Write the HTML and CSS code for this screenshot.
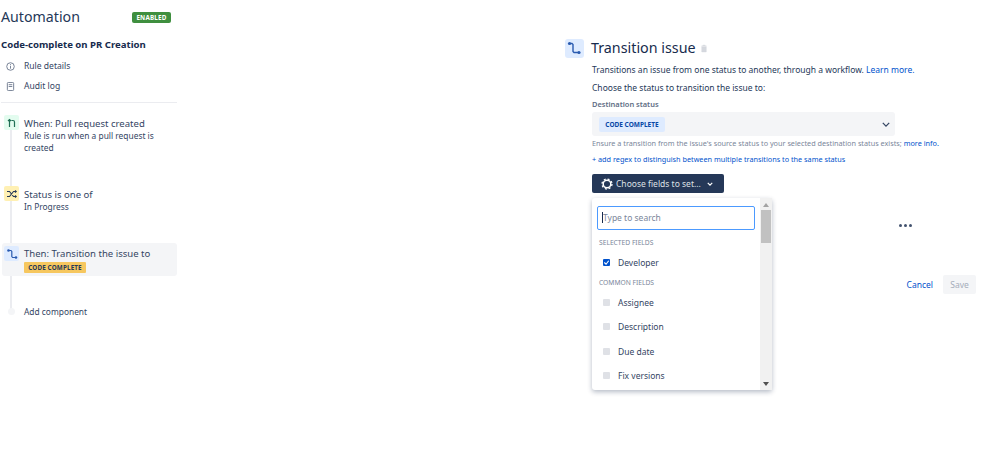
FILE: index.html
```html
<!DOCTYPE html>
<html lang="en">
<head>
<meta charset="utf-8">
<title>Automation</title>
<link rel="stylesheet" href="styles.css">
</head>
<body>
<div class="page">
  <aside class="sidebar">
    <header class="side-head">
      <h1 class="side-title">Automation</h1>
      <span class="badge-enabled">ENABLED</span>
    </header>
    <h2 class="rule-name">Code-complete on PR Creation</h2>
    <nav class="side-nav">
      <a class="nav-item">
        <svg class="nav-icon" viewBox="0 0 10 10" width="9" height="9"><circle cx="5" cy="5" r="4.200" fill="none" stroke="#6b778c" stroke-width="1"/><path d="M5 4.400v3M5 2.400v1.200" stroke="#6b778c" stroke-width="1"/></svg>
        <span>Rule details</span>
      </a>
      <a class="nav-item">
        <svg class="nav-icon" viewBox="0 0 10 10" width="9" height="9"><rect x="1.500" y="0.500" width="7" height="9" rx="1" fill="none" stroke="#6b778c"/><path d="M3 3h4M3 5h4" stroke="#6b778c"/></svg>
        <span>Audit log</span>
      </a>
    </nav>
    <div class="divider"></div>
    <div class="timeline">
      <div class="step step-when">
        <span class="step-icon icon-green">
          <svg viewBox="0 0 12 12" width="12" height="12"><path d="M3.500 10V2.500M2 4 3.500 2.500 5 4M5.500 3.500H7a1.500 1.500 0 0 1 1.500 1.500v5" fill="none" stroke="#1f6f55" stroke-width="1.200"/></svg>
        </span>
        <div class="step-body">
          <div class="step-title step-title-low">When: Pull request created</div>
          <div class="step-sub">Rule is run when a pull request is created</div>
        </div>
      </div>
      <div class="step step-cond">
        <span class="step-icon icon-yellow">
          <svg viewBox="0 0 12 12" width="12" height="12"><path d="M1 3.500h2.500l4 5H10M1 8.500h2.500l4-5H10M9 2.500l1.200 1-1.200 1M9 7.500l1.200 1-1.200 1" fill="none" stroke="#253858" stroke-width="1.100"/></svg>
        </span>
        <div class="step-body">
          <div class="step-title step-title-low">Status is one of</div>
          <div class="step-sub">In Progress</div>
        </div>
      </div>
      <div class="step step-then">
        <span class="step-icon icon-blue">
          <svg viewBox="0 0 14 14" width="14" height="14"><path d="M3.500 3.500H6l.8 1v5l.8 1H11" fill="none" stroke="#2a5bb0" stroke-width="1.200"/><circle cx="3.500" cy="3.500" r="1.300" fill="#2a5bb0"/><circle cx="11" cy="10.500" r="1.300" fill="#2a5bb0"/></svg>
        </span>
        <div class="step-body">
          <div class="step-title">Then: Transition the issue to</div>
          <span class="tag-yellow">CODE COMPLETE</span>
        </div>
      </div>
      <div class="step step-add">
        <span class="add-dot"></span>
        <div class="add-label">Add component</div>
      </div>
    </div>
  </aside>

  <main class="panel">
    <div class="panel-head">
      <span class="panel-icon">
        <svg viewBox="0 0 19 19" width="19" height="19"><path d="M4.500 4.500H7l1 1v7l1 1h5" fill="none" stroke="#2a5bb0" stroke-width="1.400"/><circle cx="4.500" cy="4.500" r="1.600" fill="#2a5bb0"/><circle cx="14" cy="13.500" r="1.600" fill="#2a5bb0"/></svg>
      </span>
      <h2 class="panel-title">Transition issue</h2>
      <svg class="trash" viewBox="0 0 8 10" width="6" height="9"><path d="M0.500 1.500h7M2.500 1.500V.6h3v.9M1 2.500h6v7H1z" fill="#d5d8de" stroke="#d5d8de" stroke-width="0.700"/></svg>
    </div>
    <div class="panel-body">
      <p class="desc">Transitions an issue from one status to another, through a workflow. <a class="link">Learn more.</a></p>
      <p class="desc desc-second">Choose the status to transition the issue to:</p>
      <label class="field-label">Destination status</label>
      <div class="select">
        <span class="tag-blue">CODE COMPLETE</span>
        <svg class="select-chev" viewBox="0 0 10 6" width="8" height="5"><path d="M1 1l4 4 4-4" fill="none" stroke="#344563" stroke-width="1.600"/></svg>
      </div>
      <p class="help">Ensure a transition from the issue's source status to your selected destination status exists; <a class="link">more info.</a></p>
      <p class="help help-link"><a class="link">+ add regex to distinguish between multiple transitions to the same status</a></p>
      <div class="fields-wrap">
        <button class="fields-btn">
          <svg viewBox="0 0 12 12" width="12" height="12"><circle cx="6" cy="6" r="3.800" fill="none" stroke="#fff" stroke-width="1.500"/><circle cx="6" cy="6" r="5" fill="none" stroke="#fff" stroke-width="1.300" stroke-dasharray="2 1.930"/></svg>
          <span>Choose fields to set...</span>
          <svg class="btn-chev" viewBox="0 0 8 5" width="6" height="4"><path d="M1 1l3 3 3-3" fill="none" stroke="#fff" stroke-width="1.600"/></svg>
        </button>
        <div class="menu">
          <div class="menu-main">
            <div class="search-box"><span class="caret"></span><span class="search-ph">Type to search</span></div>
            <div class="group-label group-first">SELECTED FIELDS</div>
            <div class="option"><span class="check check-on"><svg viewBox="0 0 8 8" width="7" height="7"><path d="M1.500 4l2 2 3-4" fill="none" stroke="#fff" stroke-width="1.300"/></svg></span>Developer</div>
            <div class="group-label">COMMON FIELDS</div>
            <div class="option"><span class="check"></span>Assignee</div>
            <div class="option"><span class="check"></span>Description</div>
            <div class="option"><span class="check"></span>Due date</div>
            <div class="option"><span class="check"></span>Fix versions</div>
          </div>
          <div class="scrollbar">
            <span class="arrow-up"></span>
            <span class="thumb"></span>
            <span class="arrow-down"></span>
          </div>
        </div>
      </div>
      <div class="more"><i></i><i></i><i></i></div>
      <div class="actions">
        <a class="link cancel">Cancel</a>
        <button class="save">Save</button>
      </div>
    </div>
  </main>
</div>
</body>
</html>
```
FILE: styles.css
```css
* { box-sizing: border-box; }
html, body { margin: 0; padding: 0; background: #fff; }
body { font-family: "Noto Sans", sans-serif; color: #253858; }
.page { display: flex; width: 998px; height: 451px; overflow: hidden; }

.sidebar { width: 177px; padding-top: 6px; flex: none; }
.side-head { display: flex; align-items: center; justify-content: space-between; height: 22px; padding: 0 6px 0 1px; }
.side-title { margin: 0; font-size: 14.200px; font-weight: 400; line-height: 22px; color: #253858; }
.badge-enabled { width: 39px; text-align: center; background: #3f8f3f; color: #fff; font-size: 6.300px; font-weight: 700; line-height: 11px; height: 11px; border-radius: 2px; letter-spacing: .2px; }
.rule-name { margin: 9px 0 0 1px; font-size: 9.600px; font-weight: 700; line-height: 16px; color: #172b4d; }
.side-nav { margin-top: 3px; }
.nav-item { display: flex; align-items: center; height: 20px; font-size: 8.550px; color: #344563; }
.nav-icon { margin: 0 9px 0 6px; flex: none; }
.divider { height: 1px; background: #ebecf0; margin: 6px 0 0 1px; }

.timeline { position: relative; margin-top: 12px; }
.timeline::before { content: ""; position: absolute; left: 10px; top: 10px; height: 186px; width: 2px; background: #ebecf0; }
.step { position: relative; display: flex; }
.step-icon { flex: none; width: 15px; height: 15px; margin: 0 5px 0 4px; border-radius: 2px; display: flex; align-items: center; justify-content: center; }
.icon-green { background: #e3fcef; }
.icon-yellow { background: #fff0b3; }
.icon-blue { background: #deebff; }
.step-title { font-size: 9.550px; line-height: 15px; color: #344563; }
.step-title-low { padding-top: 1px; margin-bottom: -1px; }
.step-sub { font-size: 8.400px; line-height: 12px; color: #344563; }
.step-when { height: 71px; }
.step-when .step-body { width: 140px; }
.step-cond { height: 57px; }
.step-then { background: #f4f5f7; height: 33px; border-radius: 3px; margin-left: 2px; padding-top: 3px; }
.step-then .step-icon { margin-left: 2px; }
.tag-yellow { display: block; width: 62px; text-align: center; background: #f6c75f; color: #253858; font-size: 6.300px; font-weight: 700; line-height: 11px; height: 11px; border-radius: 1px; letter-spacing: .15px; margin-top: 1px; }
.step-add { margin-top: 28px; align-items: center; height: 14px; }
.add-dot { flex: none; width: 7px; height: 7px; border-radius: 50%; background: #f4f5f7; margin: 0 9px 0 8px; }
.add-label { font-size: 8.400px; color: #344563; }

.panel { margin-left: 388px; width: 411px; padding-top: 39px; }
.panel-head { display: flex; align-items: center; height: 19px; }
.panel-icon { width: 19px; height: 19px; border-radius: 3px; background: #deebff; margin-right: 7px; flex: none; }
.panel-icon svg { display: block; }
.panel-title { margin: -2px 0 0; font-size: 14.300px; font-weight: 400; line-height: 19px; color: #172b4d; }
.trash { margin: -1px 0 0 5px; }
.panel-body { padding: 5px 0 0 27px; }
.desc { margin: 0; font-size: 8.500px; line-height: 13px; color: #253858; }
.desc-second { margin-top: 5px; }
.link { color: #0052cc; }
.field-label { display: block; margin-top: 5px; font-size: 7.450px; font-weight: 600; line-height: 11px; color: #5e6c84; }
.select { margin-top: 2px; width: 303px; height: 24px; background: #f4f5f7; border-radius: 3px; display: flex; align-items: center; justify-content: space-between; padding: 0 5px 0 7px; }
.tag-blue { width: 66px; text-align: center; background: #deebff; color: #0747a6; font-size: 6.500px; font-weight: 700; line-height: 15px; height: 15px; border-radius: 2px; }
.help { margin: 2px 0 0; font-size: 7.270px; line-height: 11px; color: #7a869a; white-space: nowrap; }
.help-link { margin-top: 5px; }
.fields-wrap { position: relative; margin-top: 9px; }
.fields-btn { display: flex; align-items: center; width: 132px; height: 19px; background: #253858; border: 0; border-radius: 2px; padding: 0 0 0 9px; color: #dfe1e6; font: 8.500px "Noto Sans", sans-serif; }
.fields-btn span { margin-left: 3px; }
.btn-chev { margin-left: 6px; }
.menu { position: absolute; left: 0; top: 24px; width: 180px; height: 192px; background: #fff; border-radius: 3px; box-shadow: 0 2px 5px rgba(9,30,66,.3); display: flex; z-index: 2; }
.menu-main { flex: 1; padding: 8px 5px 0; }
.search-box { width: 158px; height: 24px; border: 1px solid #4c9aff; border-radius: 2px; display: flex; align-items: center; padding: 0 0 2px 4px; }
.caret { width: 1px; height: 11px; background: #172b4d; }
.search-ph { font-size: 8.500px; color: #7a869a; }
.group-label { font-size: 6.700px; line-height: 11px; color: #7a869a; margin: 3px 0 2px 2px; height: 11px; }
.group-first { margin-top: 7px; }
.option { display: flex; align-items: center; height: 24.300px; font-size: 8.500px; color: #344563; padding-left: 6px; }
.check { width: 7px; height: 7px; border-radius: 1px; background: #dfe1e6; margin-right: 8px; flex: none; display: flex; }
.check-on { background: #0052cc; }
.scrollbar { width: 12px; background: #f1f1f1; position: relative; flex: none; display: flex; flex-direction: column; align-items: center; }
.arrow-up { width: 0; height: 0; border: 3px solid transparent; border-top: 0; border-bottom: 4px solid #a3a3a3; margin-top: 5px; }
.thumb { width: 10px; height: 33px; background: #c1c1c1; margin-top: 3px; }
.arrow-down { width: 0; height: 0; border: 3px solid transparent; border-bottom: 0; border-top: 4px solid #505050; margin-top: auto; margin-bottom: 4px; }
.more { display: flex; gap: 2px; margin: 31px 0 0 307px; height: 3px; }
.more i { width: 3px; height: 3px; border-radius: 50%; background: #42526e; }
.actions { display: flex; align-items: center; justify-content: flex-end; margin-top: 48px; gap: 10px; }
.cancel { font-size: 8.500px; }
.save { width: 33px; height: 19px; border: 0; border-radius: 2px; background: #f4f5f7; color: #a5adba; font: 8.500px "Noto Sans", sans-serif; padding: 0; }
```
